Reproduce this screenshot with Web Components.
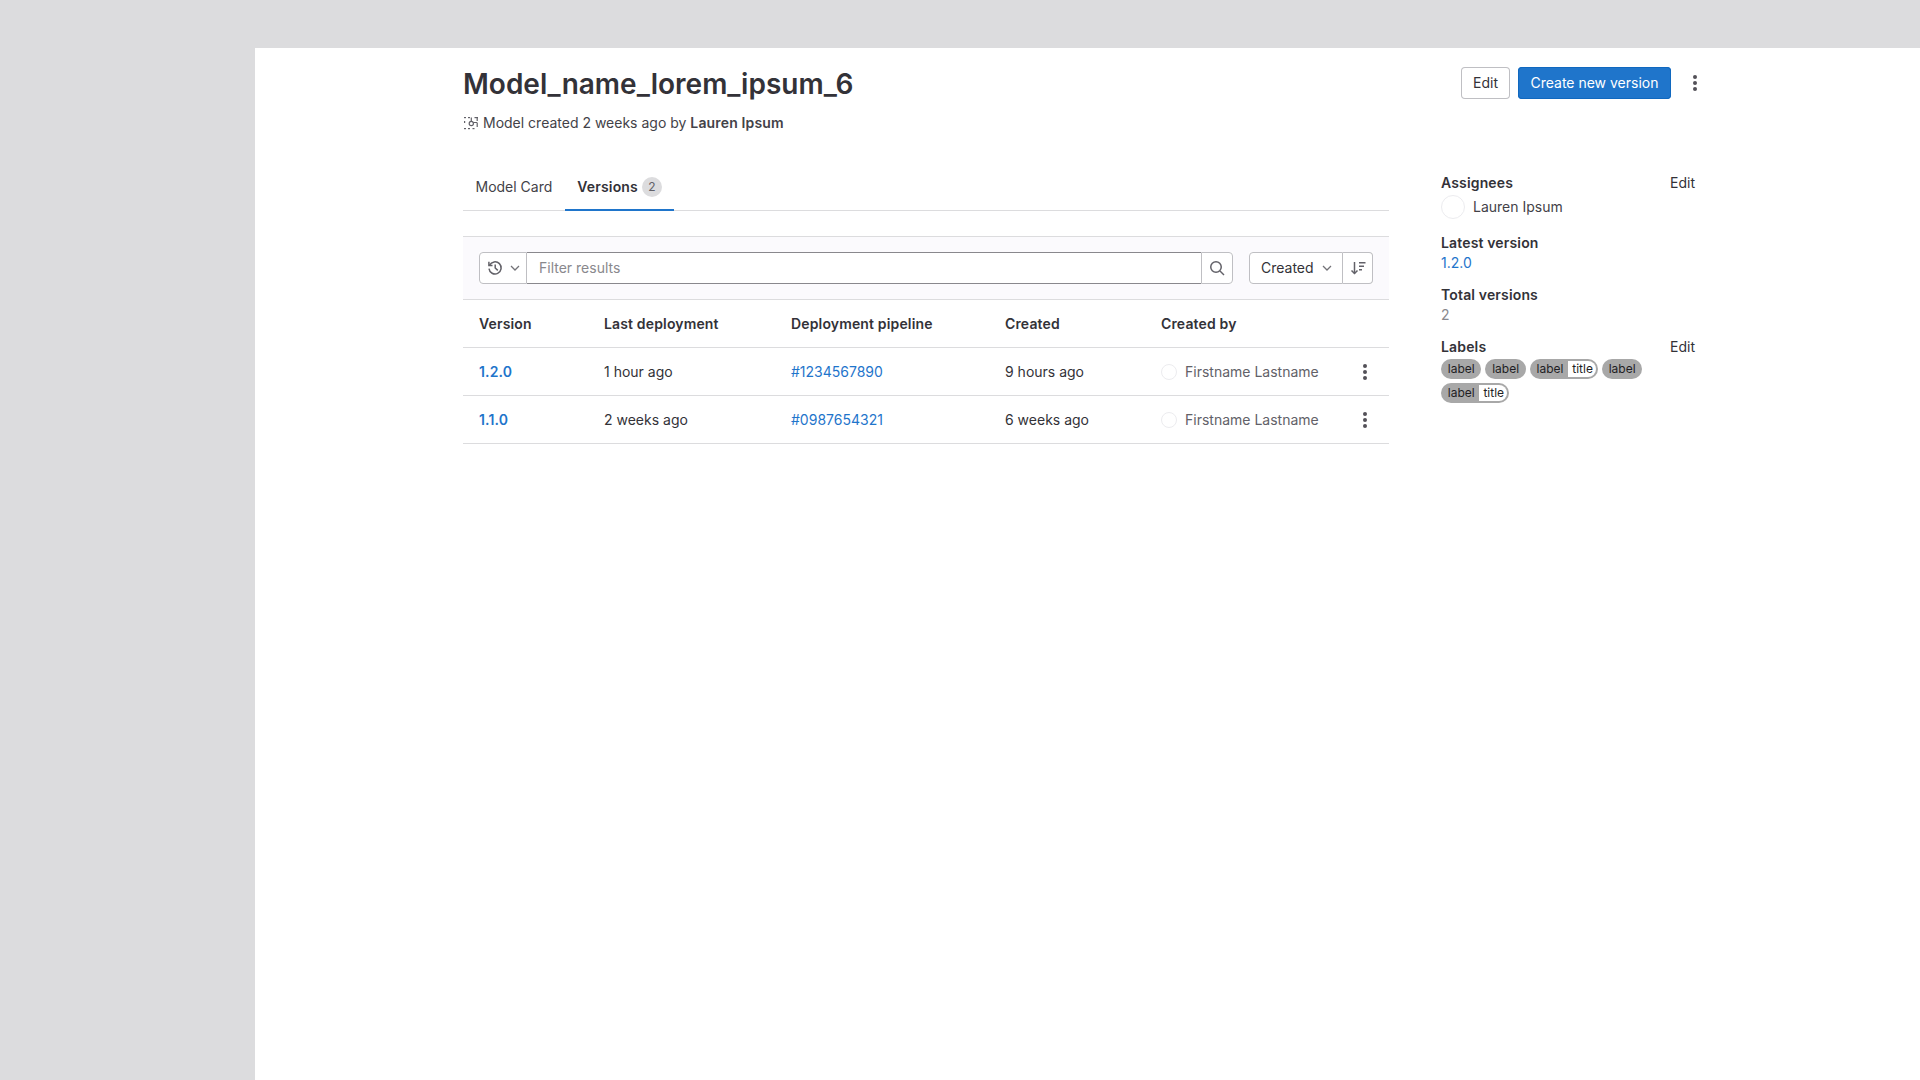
<!DOCTYPE html>
<html lang="en">
<head>
<meta charset="utf-8">
<title>Model_name_lorem_ipsum_6</title>
<style>
  html, body { margin: 0; background: #dcdcde; }
  body { font-family: Inter, "Noto Sans", sans-serif; font-size: 14px; line-height: 20px; color: #333238; }
  a { color: #1f75cb; text-decoration: none; }
</style>
</head>
<body>
<model-page>
  <page-header slot="header" title-text="Model_name_lorem_ipsum_6">
    <model-icon slot="icon"></model-icon>
    <span slot="meta">Model created 2 weeks ago by <b style="font-weight:600;letter-spacing:.15px">Lauren Ipsum</b></span>
    <gl-button slot="actions">Edit</gl-button>
    <gl-button slot="actions" variant="primary">Create new version</gl-button>
    <gl-dots slot="actions" size="32"></gl-dots>
  </page-header>

  <section slot="main">
    <tab-bar count="2"></tab-bar>
    <filter-bar></filter-bar>
    <version-table>
      <version-row version="1.2.0" deployed="1 hour ago" pipeline="#1234567890" created="9 hours ago" author="Firstname Lastname"></version-row>
      <version-row version="1.1.0" deployed="2 weeks ago" pipeline="#0987654321" created="6 weeks ago" author="Firstname Lastname"></version-row>
    </version-table>
  </section>

  <aside slot="side">
    <side-block heading="Assignees" editable>
      <div style="display:flex;align-items:center;gap:8px;margin:2px 0 14px;color:#434248">
        <span style="box-sizing:border-box;width:24px;height:24px;border-radius:50%;border:1px solid #ececef;background:#fff"></span>
        Lauren Ipsum
      </div>
    </side-block>
    <side-block heading="Latest version"><a href="#">1.2.0</a></side-block>
    <side-block heading="Total versions"><span style="color:#89888d">2</span></side-block>
    <side-block heading="Labels" editable>
      <div style="display:flex;flex-wrap:wrap;gap:4px;padding-top:2px">
        <gl-label>label</gl-label>
        <gl-label>label</gl-label>
        <gl-label scope="title">label</gl-label>
        <gl-label>label</gl-label>
        <gl-label scope="title">label</gl-label>
      </div>
    </side-block>
  </aside>
</model-page>

<script>
  /** Shared 16px icon paths, all drawn on a 16 box. */
  const ICONS = {
    history: `<g fill="none" stroke="currentColor" stroke-width="1.5">
        <path d="M2.6 5.2A6.1 6.1 0 1 1 2 8.6"/>
        <path d="M1.9 1.8v3.6h3.6"/>
        <path d="M8.2 4.4V8l2.6 2.4"/></g>`,
    chevron: `<path d="M4 6l4 4 4-4" fill="none" stroke="currentColor" stroke-width="1.25"/>`,
    search: `<g fill="none" stroke="currentColor" stroke-width="1.5">
        <circle cx="7" cy="7" r="5.25"/><path d="M11 11l4 4"/></g>`,
    sort: `<g fill="none" stroke="currentColor" stroke-width="1.5">
        <path d="M4.5 2v11.5"/><path d="M1.5 10.5l3 3 3-3"/>
        <path d="M9 2.75h6.5M9 6.25h5M9 9.75h3"/></g>`,
    dots: `<g fill="currentColor"><circle cx="8" cy="2" r="2"/><circle cx="8" cy="8" r="2"/><circle cx="8" cy="14" r="2"/></g>`,
  };

  /** Page frame: grey top bar and left rail around the white content. */
  class ModelPage extends HTMLElement {
    constructor() {
      super();
      this.attachShadow({ mode: "open" }).innerHTML = `
        <style>
          :host { display: block; padding: 48px 0 0 255px; }
          .content { background: #fff; height: 1032px; box-sizing: border-box; padding: 0 225px 0 208px; overflow: hidden; }
          .columns { display: grid; grid-template-columns: 926px 254px; column-gap: 52px; }
          ::slotted(aside) { padding-top: 9px; }
        </style>
        <div class="content">
          <slot name="header"></slot>
          <div class="columns">
            <slot name="main"></slot>
            <slot name="side"></slot>
          </div>
        </div>`;
    }
  }

  class PageHeader extends HTMLElement {
    constructor() {
      super();
      this.attachShadow({ mode: "open" }).innerHTML = `
        <style>
          :host { display: block; padding-top: 17px; height: 116px; box-sizing: border-box; }
          .top { display: flex; align-items: center; justify-content: space-between; height: 36px; margin-right: -16px; }
          h1 { margin: 0; padding-top: 2px; font-size: 28px; line-height: 36px; font-weight: 600; color: #333238; }
          .actions { display: flex; align-items: center; gap: 8px; }
          .meta { display: flex; align-items: center; gap: 4px; margin-top: 12px; color: #434248; }
        </style>
        <div class="top">
          <h1></h1>
          <div class="actions"><slot name="actions"></slot></div>
        </div>
        <div class="meta"><slot name="icon"></slot><slot name="meta"></slot></div>`;
      this.shadowRoot.querySelector("h1").textContent = this.getAttribute("title-text");
    }
  }

  class ModelIcon extends HTMLElement {
    constructor() {
      super();
      this.attachShadow({ mode: "open" }).innerHTML = `
        <style>:host { display: inline-flex; color: #626168; }</style>
        <svg width="16" height="16" viewBox="0 0 16 16">
          <g fill="currentColor">
            <rect x="1" y="2" width="2" height="1.2"/><rect x="5" y="2" width="2" height="1.2"/>
            <rect x="1" y="6" width="1.2" height="2"/><rect x="1" y="13" width="2" height="1.2"/>
            <rect x="5" y="13" width="2" height="1.2"/><rect x="9.5" y="13" width="2" height="1.2"/>
            <rect x="11.5" y="2" width="3.5" height="1.2"/><rect x="13.6" y="2" width="1.2" height="4"/>
            <rect x="13.6" y="8" width="1.2" height="4"/>
          </g>
          <g fill="none" stroke="currentColor" stroke-width="1.2">
            <circle cx="8.3" cy="8.5" r="2.1"/><path d="M8.3 6.4V2.5M10.4 7.5h4"/>
          </g>
        </svg>`;
    }
  }

  class GlButton extends HTMLElement {
    constructor() {
      super();
      this.attachShadow({ mode: "open" }).innerHTML = `
        <style>
          :host { display: inline-flex; align-items: center; height: 32px; box-sizing: border-box; padding: 0 12px;
                  border-radius: 4px; background: #fff; color: #333238; box-shadow: inset 0 0 0 1px #bfbfc3; cursor: pointer; }
          :host([variant="primary"]) { padding: 0 12.5px; background: #1f75cb; color: #fff; box-shadow: inset 0 0 0 1px #1068bf; }
        </style>
        <slot></slot>`;
    }
  }

  class GlDots extends HTMLElement {
    constructor() {
      super();
      const size = this.getAttribute("size") || 32;
      this.attachShadow({ mode: "open" }).innerHTML = `
        <style>:host { display: inline-flex; align-items: center; justify-content: center; width: ${size}px; height: ${size}px; color: #535158; }</style>
        <svg width="16" height="16" viewBox="0 0 16 16">${ICONS.dots}</svg>`;
    }
  }

  class TabBar extends HTMLElement {
    constructor() {
      super();
      this.attachShadow({ mode: "open" }).innerHTML = `
        <style>
          :host { display: flex; height: 47px; box-sizing: border-box; box-shadow: inset 0 -1px 0 #dcdcde; }
          .tab { display: flex; align-items: center; gap: 4px; padding: 0 12.5px 1px; color: #434248; }
          .active { color: #333238; font-weight: 600; letter-spacing: .15px; box-shadow: inset 0 -2px 0 #1f75cb; }
          .badge { display: inline-flex; align-items: center; justify-content: center; width: 20px; height: 20px;
                   border-radius: 50%; background: #dcdcde; color: #626168; font-size: 12px; font-weight: 400; }
        </style>
        <div class="tab">Model Card</div>
        <div class="tab active">Versions <span class="badge">${this.getAttribute("count")}</span></div>`;
    }
  }

  class FilterBar extends HTMLElement {
    constructor() {
      super();
      this.attachShadow({ mode: "open" }).innerHTML = `
        <style>
          :host { display: flex; align-items: center; height: 64px; box-sizing: border-box; margin-top: 25px; padding: 0 16px;
                  background: #fbfafd; border-top: 1px solid #dcdcde; border-bottom: 1px solid #dcdcde; color: #626168; }
          .group { display: flex; height: 32px; box-sizing: border-box; background: #fff; }
          .seg { display: flex; align-items: center; justify-content: center; box-sizing: border-box; height: 32px; border: 1px solid #bfbfc3; }
          .history { width: 48px; border-radius: 4px 0 0 4px; gap: 4px; padding-left: 7px; justify-content: flex-start; }
          input { box-sizing: border-box; width: 674px; height: 32px; padding: 0 12px 1px; border: 1px solid #89888d; border-width: 1px 0;
                  font: inherit; background: #fff; outline: none; }
          input::placeholder { color: #89888d; opacity: 1; }
          .search { width: 32px; border-left: 1px solid #bfbfc3; border-radius: 0 4px 4px 0; }
          .sort { margin-left: 16px; }
          .created { width: 94px; border-radius: 4px 0 0 4px; color: #333238; gap: 5px; padding-left: 11px; justify-content: flex-start; }
          .dir { width: 30px; border-left: 0; border-radius: 0 4px 4px 0; }
          .chev { color: #737278; }
        </style>
        <div class="group">
          <div class="seg history">
            <svg width="16" height="16" viewBox="0 0 16 16">${ICONS.history}</svg>
            <svg class="chev" width="16" height="16" viewBox="0 0 16 16">${ICONS.chevron}</svg>
          </div>
          <input placeholder="Filter results" aria-label="Filter results">
          <div class="seg search"><svg width="16" height="16" viewBox="0 0 16 16">${ICONS.search}</svg></div>
        </div>
        <div class="group sort">
          <div class="seg created">Created
            <svg class="chev" width="16" height="16" viewBox="0 0 16 16">${ICONS.chevron}</svg>
          </div>
          <div class="seg dir"><svg width="16" height="16" viewBox="0 0 16 16">${ICONS.sort}</svg></div>
        </div>`;
    }
  }

  const COLUMNS = "grid-template-columns: 125px 187px 214px 156px 1fr 60px;";

  class VersionTable extends HTMLElement {
    constructor() {
      super();
      this.attachShadow({ mode: "open" }).innerHTML = `
        <style>
          :host { display: block; }
          .head { display: grid; ${COLUMNS} align-items: center; height: 48px; box-sizing: border-box;
                  border-bottom: 1px solid #dcdcde; font-weight: 600; letter-spacing: .15px; color: #333238; }
          .head div { padding-left: 16px; }
        </style>
        <div class="head">
          <div>Version</div><div>Last deployment</div><div>Deployment pipeline</div><div>Created</div><div>Created by</div><div></div>
        </div>
        <slot></slot>`;
    }
  }

  class VersionRow extends HTMLElement {
    constructor() {
      super();
      const attr = (name) => this.getAttribute(name);
      this.attachShadow({ mode: "open" }).innerHTML = `
        <style>
          :host { display: grid; ${COLUMNS} align-items: center; height: 48px; box-sizing: border-box;
                  border-bottom: 1px solid #dcdcde; color: #333238; }
          .cell { padding-left: 16px; }
          a { color: #1f75cb; text-decoration: none; }
          .version { font-weight: 600; letter-spacing: .15px; }
          .author { display: flex; align-items: center; gap: 8px; color: #626168; }
          .avatar { box-sizing: border-box; width: 16px; height: 16px; border-radius: 50%; border: 1px solid #ececef; }
          .actions { display: flex; padding-left: 28px; }
        </style>
        <div class="cell"><a class="version" href="#">${attr("version")}</a></div>
        <div class="cell">${attr("deployed")}</div>
        <div class="cell"><a href="#">${attr("pipeline")}</a></div>
        <div class="cell">${attr("created")}</div>
        <div class="cell author"><span class="avatar"></span>${attr("author")}</div>
        <div class="cell actions"><gl-dots size="16"></gl-dots></div>`;
    }
  }

  class SideBlock extends HTMLElement {
    constructor() {
      super();
      const edit = this.hasAttribute("editable") ? `<span class="edit">Edit</span>` : "";
      this.attachShadow({ mode: "open" }).innerHTML = `
        <style>
          :host { display: block; margin-bottom: 12px; }
          .row { display: flex; justify-content: space-between; font-weight: 600; letter-spacing: .15px; color: #333238; }
          .edit { font-weight: 400; letter-spacing: 0; color: #333238; }
        </style>
        <div class="row"><span>${this.getAttribute("heading")}</span>${edit}</div>
        <slot></slot>`;
    }
  }

  class GlLabel extends HTMLElement {
    constructor() {
      super();
      const scope = this.getAttribute("scope");
      this.attachShadow({ mode: "open" }).innerHTML = `
        <style>
          :host { display: inline-flex; height: 20px; box-sizing: border-box; border-radius: 10px; background: #a8a8a8;
                  color: #1f1e24; font-size: 12px; line-height: 20px; overflow: hidden; }
          .key { padding: 0 6.75px; }
          :host([scope]) .key { padding-right: 4.75px; }
          .scope { box-sizing: border-box; height: 16px; margin: 2px 2px 2px 0; padding: 0 3px 0 4px; line-height: 16px; background: #fff; border-radius: 0 8px 8px 0; }
        </style>
        <span class="key"><slot></slot></span>${scope ? `<span class="scope">${scope}</span>` : ""}`;
    }
  }

  customElements.define("model-page", ModelPage);
  customElements.define("page-header", PageHeader);
  customElements.define("model-icon", ModelIcon);
  customElements.define("gl-button", GlButton);
  customElements.define("gl-dots", GlDots);
  customElements.define("tab-bar", TabBar);
  customElements.define("filter-bar", FilterBar);
  customElements.define("version-table", VersionTable);
  customElements.define("version-row", VersionRow);
  customElements.define("side-block", SideBlock);
  customElements.define("gl-label", GlLabel);
</script>
</body>
</html>
